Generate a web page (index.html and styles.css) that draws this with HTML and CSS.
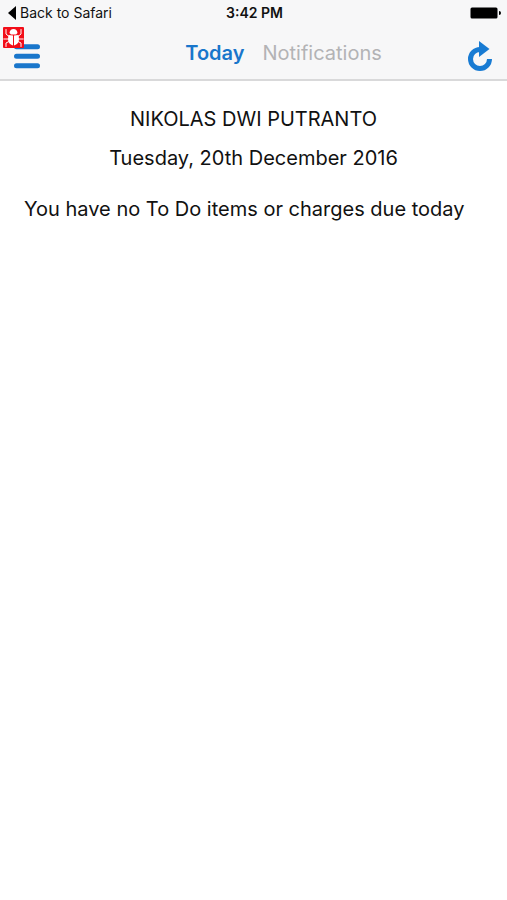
FILE: index.html
```html
<!DOCTYPE html>
<html lang="en">
<head>
<meta charset="utf-8">
<meta name="viewport" content="width=device-width, initial-scale=1">
<title>Today</title>
<link rel="stylesheet" href="styles.css">
</head>
<body>
<header class="header">
  <div class="status">
    <a class="back" href="#"><svg width="8" height="14" viewBox="0 0 8 14" aria-hidden="true"><path d="M8 0v14L0 7z"/></svg>Back to Safari</a>
    <span class="time">3:42 PM</span>
    <svg class="battery" width="31" height="12" viewBox="0 0 31 12" aria-hidden="true"><rect x=".5" y=".5" width="27" height="11" rx="1.5"/><path d="M29 4q2 0 2 2t-2 2z"/></svg>
  </div>
  <div class="toolbar">
    <button class="icon-button menu" aria-label="Menu">
      <svg width="26" height="25" viewBox="0 0 26 25" aria-hidden="true"><path d="M2.500 2.700h21M2.500 12.200h21M2.500 21.700h21"/></svg>
      <svg class="bug" width="21" height="21" viewBox="0 0 21 21" aria-hidden="true">
        <rect class="bug-tile" width="21" height="21" rx="1"/>
        <path class="bug-body" d="M6.500 6Q7 2 10.500 2t4 4l-1.500 1.500H8zM5.500 8l4.500.5V18.500Q5 17 5 12zM11 8.500l4.500-.5.5 4q0 5-5 6.500z"/>
        <path class="bug-legs" d="M6 9.500L3 7V2.500M15 9.500L18 7V2.500M6 12H.8M15 12h5.200M6 14.500L3 16v3.500M15 14.500l3 1.500v3.500"/>
      </svg>
    </button>
    <nav class="tabs">
      <a class="tab tab-active" href="#" aria-current="page">Today</a>
      <a class="tab" href="#">Notifications</a>
    </nav>
    <button class="icon-button refresh" aria-label="Refresh">
      <svg width="26" height="30" viewBox="0 0 26 30" aria-hidden="true"><path class="refresh-arc" d="M13 8.500A9.500 9.500 0 1 0 22.500 18"/><path class="refresh-head" d="M12 0l10.500 8L12 16z"/></svg>
    </button>
  </div>
</header>
<main class="content">
  <h1 class="line">NIKOLAS DWI PUTRANTO</h1>
  <p class="line date">Tuesday, 20th December 2016</p>
  <p class="message">You have no To Do items or charges due today</p>
</main>
</body>
</html>
```

FILE: styles.css
```css
* {
  box-sizing: border-box;
}

body {
  margin: 0;
  background: #fff;
  color: #111;
  font-family: Inter, "Liberation Sans", sans-serif;
  font-size: 20px;
  line-height: 24px;
}

a {
  color: inherit;
  text-decoration: none;
}

svg {
  display: block;
}

.header {
  background: #f7f7f8;
  border-bottom: 2px solid #d9d9da;
}

.status {
  display: grid;
  grid-template-columns: 1fr auto 1fr;
  align-items: center;
  height: 26px;
  padding: 0 6px 0 8px;
  font-size: 14px;
}

.back {
  display: flex;
  align-items: center;
  gap: 4px;
}

.time {
  font-weight: 600;
}

.battery {
  justify-self: end;
}

.toolbar {
  display: grid;
  grid-template-columns: 1fr auto 1fr;
  align-items: center;
  height: 53px;
  padding: 0 14px;
}

.icon-button {
  position: relative;
  padding: 0;
  border: 0;
  background: none;
}

.menu {
  justify-self: start;
  margin-top: 8px;
  stroke: #1976cb;
  stroke-width: 5;
  stroke-linecap: round;
}

.bug {
  position: absolute;
  top: -17px;
  left: -11px;
  stroke: none;
}

.bug-tile {
  fill: #f20d18;
}

.bug-body {
  fill: #fff;
}

.bug-legs {
  fill: none;
  stroke: #fff;
  stroke-width: 1;
}

.tabs {
  display: flex;
  gap: 18px;
  padding-left: 60px;
}

.tab {
  color: #b3b3b5;
}

.tab-active {
  color: #1976cb;
  font-weight: 600;
}

.refresh {
  justify-self: end;
  margin-top: 6px;
}

.refresh-arc {
  fill: none;
  stroke: #187bd3;
  stroke-width: 5;
}

.refresh-head {
  fill: #187bd3;
}

.content {
  padding: 26px 24px;
}

.line {
  margin: 0 0 15px;
  font-size: 20px;
  font-weight: 400;
  text-align: center;
}

.date {
  margin-bottom: 27px;
}

.message {
  margin: 0;
}
```
